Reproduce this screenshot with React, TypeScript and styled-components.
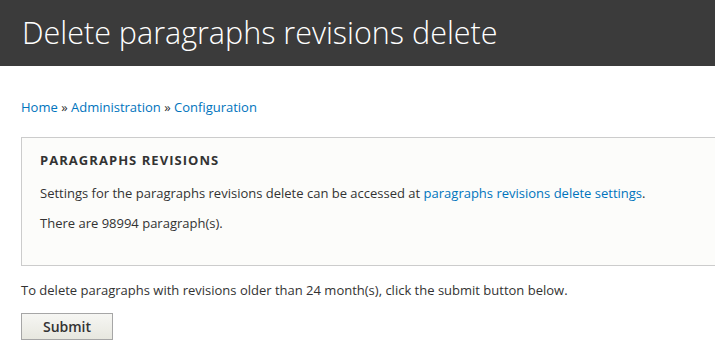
import React from 'react';
import styled, { createGlobalStyle } from 'styled-components';

const GlobalStyle = createGlobalStyle`
  html, body {
    margin: 0;
    padding: 0;
    background: #fff;
    overflow: hidden;
  }
  body {
    font-family: "Open Sans", "Liberation Sans", sans-serif;
    font-size: 13px;
    color: #333;
  }
`;

const Header = styled.header`
  background: #3b3b3b;
  height: 66px;
  padding: 0 22px;
  box-sizing: border-box;
  display: flex;
  align-items: center;
`;

const Title = styled.h1`
  margin: 0;
  font-weight: 300;
  font-size: 30.5px;
  line-height: 1;
  color: #fff;
  padding-bottom: 2px;
`;

const Content = styled.main`
  padding: 31px 0 0 21px;
`;

const Breadcrumb = styled.nav`
  font-size: 13px;
  line-height: 20px;
  color: #333;
`;

const Link = styled.a`
  color: #0074bd;
  text-decoration: none;
`;

const Fieldset = styled.fieldset`
  margin: 20px -40px 0 0;
  padding: 0;
  border: 1px solid #ccc;
  background: #fcfcfa;
  min-width: 0;
`;

const Legend = styled.div`
  padding: 13px 18px 0;
  font-size: 13px;
  font-weight: 700;
  letter-spacing: 0.08em;
  text-transform: uppercase;
  color: #333;
  line-height: 18px;
`;

const FieldsetBody = styled.div`
  padding: 4px 18px 22px;
`;

const Para = styled.p`
  margin: 10px 0;
  line-height: 20px;
`;

const Note = styled.p`
  margin: 14px 0 13px;
  line-height: 20px;
`;

const Button = styled.button`
  font-family: "Open Sans", "Liberation Sans", sans-serif;
  font-size: 14px;
  font-weight: 600;
  color: #333;
  width: 92px;
  height: 27px;
  border: 1px solid #a6a6a6;
  border-radius: 0;
  background: linear-gradient(#f6f6f3, #e7e7df);
  padding: 0;
  cursor: pointer;
`;

export default function App() {
  return (
    <>
      <GlobalStyle />
      <Header>
        <Title>Delete paragraphs revisions delete</Title>
      </Header>
      <Content>
        <Breadcrumb>
          <Link href="#">Home</Link> » <Link href="#">Administration</Link> »{' '}
          <Link href="#">Configuration</Link>
        </Breadcrumb>
        <Fieldset>
          <Legend>Paragraphs revisions</Legend>
          <FieldsetBody>
            <Para>
              Settings for the paragraphs revisions delete can be accessed at{' '}
              <Link href="#">paragraphs revisions delete settings</Link>.
            </Para>
            <Para>There are 98994 paragraph(s).</Para>
          </FieldsetBody>
        </Fieldset>
        <Note>
          To delete paragraphs with revisions older than 24 month(s), click the submit button below.
        </Note>
        <Button type="button">Submit</Button>
      </Content>
    </>
  );
}
